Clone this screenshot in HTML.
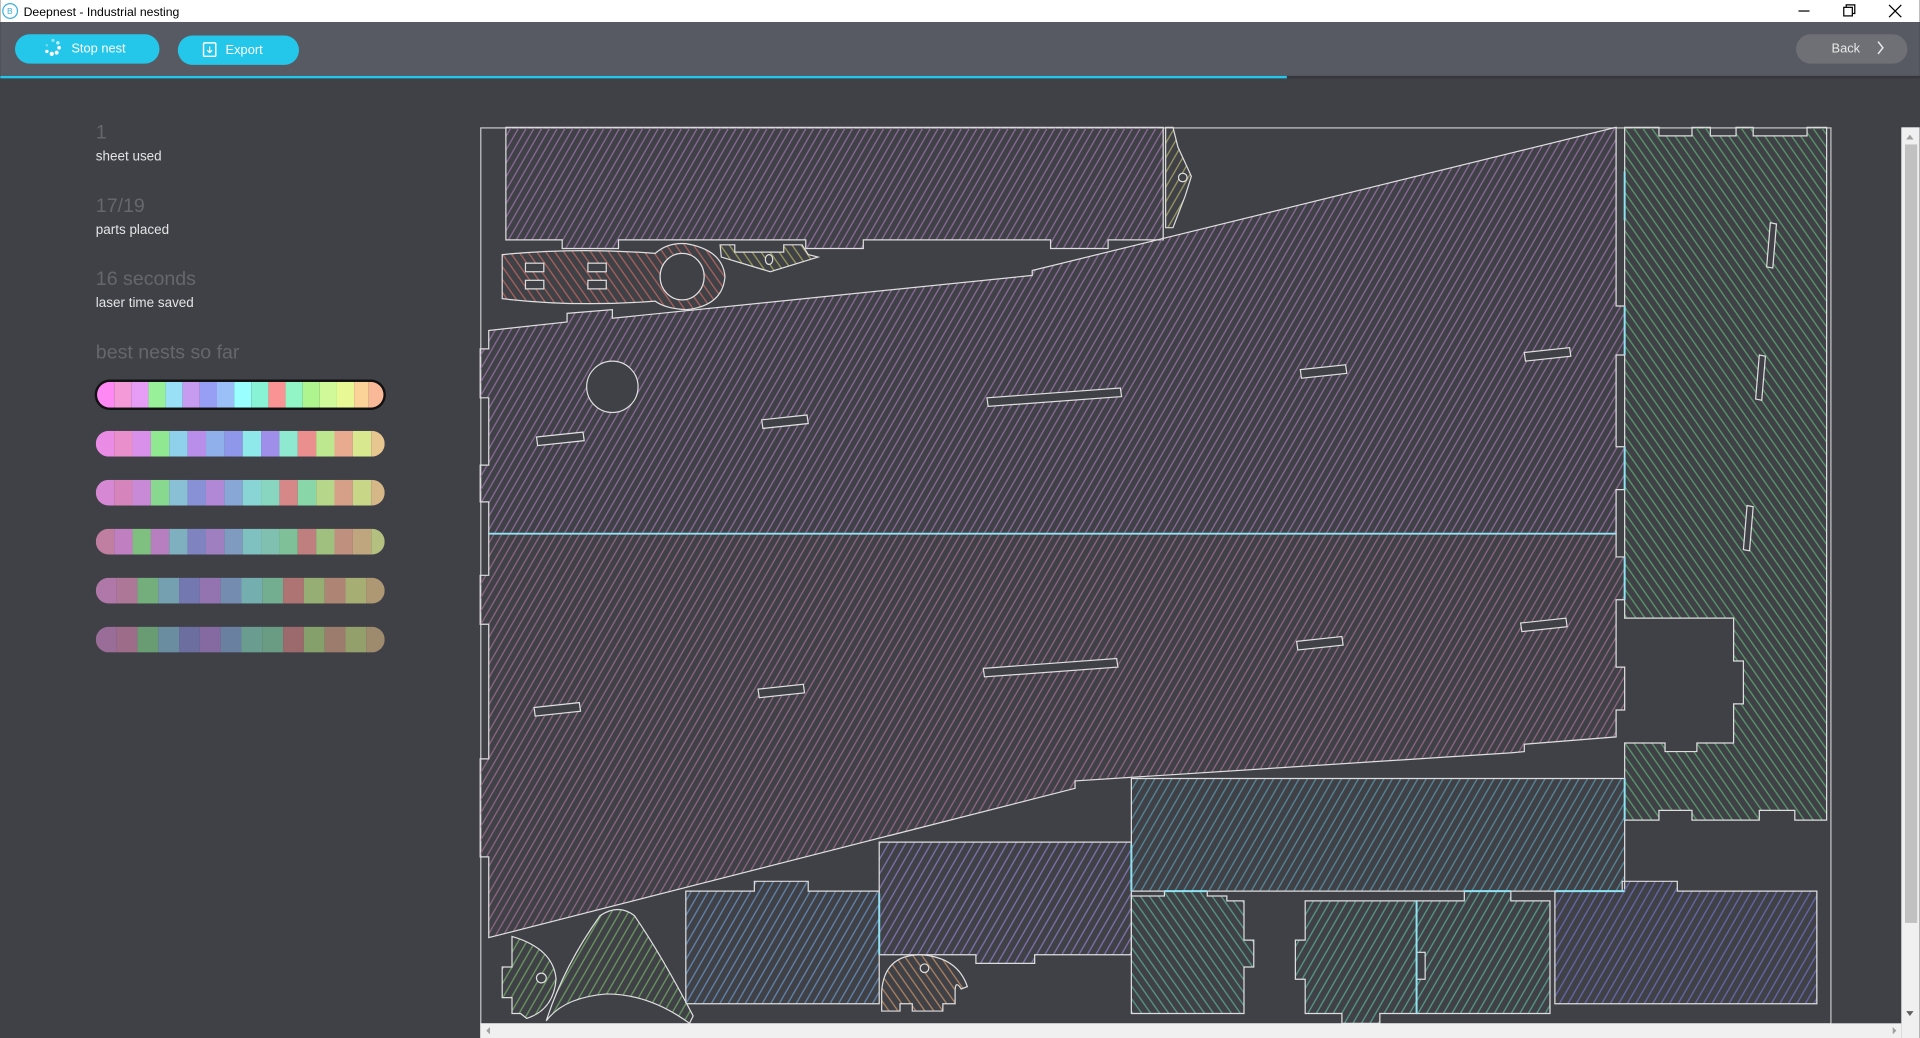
<!DOCTYPE html>
<html><head><meta charset="utf-8"><style>
html,body{margin:0;padding:0;width:1920px;height:1038px;overflow:hidden;background:#404147}
svg{display:block}
text{font-family:"Liberation Sans",sans-serif}
</style></head><body>
<svg width="1920" height="1038" viewBox="0 0 1568 848" xmlns="http://www.w3.org/2000/svg">
<defs>
<pattern id="hp" width="5.5" height="6" patternUnits="userSpaceOnUse" patternTransform="rotate(30)"><line x1="1" y1="0" x2="1" y2="6" stroke="#8a6896" stroke-width="1.1"/></pattern>
<pattern id="hpk" width="5.5" height="6" patternUnits="userSpaceOnUse" patternTransform="rotate(30)"><line x1="1" y1="0" x2="1" y2="6" stroke="#8c6480" stroke-width="1.1"/></pattern>
<pattern id="hg" width="6" height="6" patternUnits="userSpaceOnUse" patternTransform="rotate(-35)"><line x1="1" y1="0" x2="1" y2="6" stroke="#58966a" stroke-width="1.1"/></pattern>
<pattern id="hgt" width="6" height="6" patternUnits="userSpaceOnUse" patternTransform="rotate(-35)"><line x1="1" y1="0" x2="1" y2="6" stroke="#549682" stroke-width="1.1"/></pattern>
<pattern id="hgt2" width="6" height="6" patternUnits="userSpaceOnUse" patternTransform="rotate(30)"><line x1="1" y1="0" x2="1" y2="6" stroke="#549688" stroke-width="1.1"/></pattern>
<pattern id="ht" width="6" height="6" patternUnits="userSpaceOnUse" patternTransform="rotate(30)"><line x1="1" y1="0" x2="1" y2="6" stroke="#548698" stroke-width="1.1"/></pattern>
<pattern id="hb" width="6" height="6" patternUnits="userSpaceOnUse" patternTransform="rotate(30)"><line x1="1" y1="0" x2="1" y2="6" stroke="#6084ac" stroke-width="1.1"/></pattern>
<pattern id="hv" width="6" height="6" patternUnits="userSpaceOnUse" patternTransform="rotate(30)"><line x1="1" y1="0" x2="1" y2="6" stroke="#7e70ac" stroke-width="1.1"/></pattern>
<pattern id="hm" width="6" height="6" patternUnits="userSpaceOnUse" patternTransform="rotate(30)"><line x1="1" y1="0" x2="1" y2="6" stroke="#6467a8" stroke-width="1.1"/></pattern>
<pattern id="hr" width="6" height="6" patternUnits="userSpaceOnUse" patternTransform="rotate(-35)"><line x1="1" y1="0" x2="1" y2="6" stroke="#a6605a" stroke-width="1.1"/></pattern>
<pattern id="ho" width="6" height="6" patternUnits="userSpaceOnUse" patternTransform="rotate(-35)"><line x1="1" y1="0" x2="1" y2="6" stroke="#969658" stroke-width="1.1"/></pattern>
<pattern id="hlg" width="6" height="6" patternUnits="userSpaceOnUse" patternTransform="rotate(30)"><line x1="1" y1="0" x2="1" y2="6" stroke="#68965e" stroke-width="1.1"/></pattern>
<pattern id="hor" width="6" height="6" patternUnits="userSpaceOnUse" patternTransform="rotate(-35)"><line x1="1" y1="0" x2="1" y2="6" stroke="#aa805e" stroke-width="1.1"/></pattern>
<pattern id="hy" width="6" height="6" patternUnits="userSpaceOnUse" patternTransform="rotate(30)"><line x1="1" y1="0" x2="1" y2="6" stroke="#969660" stroke-width="1.1"/></pattern>
<clipPath id="sw1"><rect x="79" y="312" width="234" height="21" rx="10.5"/></clipPath>
<clipPath id="sw2"><rect x="78" y="352" width="236" height="21" rx="10.5"/></clipPath>
<clipPath id="sw3"><rect x="78" y="392" width="236" height="21" rx="10.5"/></clipPath>
<clipPath id="sw4"><rect x="78" y="432" width="236" height="21" rx="10.5"/></clipPath>
<clipPath id="sw5"><rect x="78" y="472" width="236" height="21" rx="10.5"/></clipPath>
<clipPath id="sw6"><rect x="78" y="512" width="236" height="21" rx="10.5"/></clipPath>
</defs>

<rect x="0" y="0" width="1568" height="18" fill="#ffffff"/>
<circle cx="8" cy="9" r="6" fill="none" stroke="#3ab0e0" stroke-width="1"/>
<text x="5.5" y="11.5" font-size="7" fill="#3ab0e0">B</text>
<text x="19" y="13" font-size="10" fill="#000">Deepnest - Industrial nesting</text>
<line x1="1469" y1="9" x2="1478" y2="9" stroke="#000" stroke-width="1"/>
<rect x="1506" y="6" width="7" height="7" fill="none" stroke="#000" stroke-width="1"/>
<path d="M1508 6V4h7v7h-2" fill="none" stroke="#000" stroke-width="1"/>
<path d="M1543 4l10 10M1553 4l-10 10" stroke="#000" stroke-width="1"/>

<rect x="0" y="18" width="1568" height="44" fill="#575a63"/>
<rect x="0" y="62" width="1568" height="2" fill="#36373c"/>
<rect x="0" y="62" width="1051" height="2" fill="#24c7ea"/>
<rect x="12" y="28" width="118" height="24" rx="12" fill="#24c7ea"/>
<g fill="#fff"><circle cx="43" cy="33" r="1.3" opacity=".5"/><circle cx="47" cy="35" r="1.4" opacity=".7"/><circle cx="48" cy="39" r="1.5"/><circle cx="46" cy="43" r="1.6"/><circle cx="42" cy="44" r="1.7"/><circle cx="38" cy="42" r="1.4"/><circle cx="38" cy="37" r="1" opacity=".4"/></g>
<text x="58" y="43" font-size="10.5" fill="#fff">Stop nest</text>
<rect x="145" y="29" width="99" height="24" rx="12" fill="#24c7ea"/>
<rect x="166" y="35" width="10" height="11" rx="1" fill="none" stroke="#fff" stroke-width="1.2"/>
<path d="M171 38v5M169 41l2 2 2-2" stroke="#fff" fill="none" stroke-width="1"/>
<text x="184" y="44" font-size="10.5" fill="#fff">Export</text>
<rect x="1467" y="28" width="91" height="24" rx="12" fill="#6f7075"/>
<text x="1496" y="43" font-size="10.5" fill="#e8e8e8">Back</text>
<path d="M1534 34l4 5-4 5" stroke="#e8e8e8" fill="none" stroke-width="1.2"/>

<text x="78" y="113" font-size="16" fill="#65676d">1</text>
<text x="78" y="131" font-size="11" fill="#e4e4e4">sheet used</text>
<text x="78" y="173" font-size="16" fill="#65676d">17/19</text>
<text x="78" y="191" font-size="11" fill="#e4e4e4">parts placed</text>
<text x="78" y="233" font-size="16" fill="#65676d">16 seconds</text>
<text x="78" y="251" font-size="11" fill="#e4e4e4">laser time saved</text>
<text x="78" y="293" font-size="16" fill="#65676d">best nests so far</text>

<rect x="77" y="310" width="238" height="25" rx="12.5" fill="#111"/>
<g clip-path="url(#sw1)">
<rect x="79" y="312" width="14" height="21" fill="#ff88f5"/><rect x="93" y="312" width="14" height="21" fill="#f59ad8"/><rect x="107" y="312" width="14" height="21" fill="#e79df5"/><rect x="121" y="312" width="14" height="21" fill="#98f098"/><rect x="135" y="312" width="14" height="21" fill="#99e0f7"/><rect x="149" y="312" width="14" height="21" fill="#c79bf0"/><rect x="163" y="312" width="14" height="21" fill="#979ff5"/><rect x="177" y="312" width="14" height="21" fill="#9ac0f7"/><rect x="191" y="312" width="14" height="21" fill="#99ffff"/><rect x="205" y="312" width="14" height="21" fill="#88f3d5"/><rect x="219" y="312" width="14" height="21" fill="#fa9393"/><rect x="233" y="312" width="14" height="21" fill="#91f5c5"/><rect x="247" y="312" width="14" height="21" fill="#aef58f"/><rect x="261" y="312" width="14" height="21" fill="#d0fa99"/><rect x="275" y="312" width="14" height="21" fill="#e8f894"/><rect x="289" y="312" width="12" height="21" fill="#fbd298"/><rect x="301" y="312" width="14" height="21" fill="#f9b897"/>
</g>
<g clip-path="url(#sw2)">
<rect x="78" y="352" width="15" height="21" fill="#ea8ce6"/><rect x="93" y="352" width="15" height="21" fill="#e88fcc"/><rect x="108" y="352" width="15" height="21" fill="#d890ea"/><rect x="123" y="352" width="15" height="21" fill="#90e890"/><rect x="138" y="352" width="15" height="21" fill="#8fd0ea"/><rect x="153" y="352" width="15" height="21" fill="#b98eea"/><rect x="168" y="352" width="15" height="21" fill="#8fb0ea"/><rect x="183" y="352" width="15" height="21" fill="#8f97ea"/><rect x="198" y="352" width="15" height="21" fill="#8fe9ea"/><rect x="213" y="352" width="15" height="21" fill="#9f8fea"/><rect x="228" y="352" width="15" height="21" fill="#8fe8d0"/><rect x="243" y="352" width="15" height="21" fill="#ea8e8e"/><rect x="258" y="352" width="15" height="21" fill="#bee88f"/><rect x="273" y="352" width="15" height="21" fill="#e9ab8f"/><rect x="288" y="352" width="15" height="21" fill="#d8e88f"/><rect x="303" y="352" width="11" height="21" fill="#e8c68f"/>
</g>
<g clip-path="url(#sw3)">
<rect x="78" y="392" width="15" height="21" fill="#d688d4"/><rect x="93" y="392" width="15" height="21" fill="#d585bb"/><rect x="108" y="392" width="15" height="21" fill="#c88ad6"/><rect x="123" y="392" width="15" height="21" fill="#88d890"/><rect x="138" y="392" width="15" height="21" fill="#89c0d6"/><rect x="153" y="392" width="15" height="21" fill="#8890d6"/><rect x="168" y="392" width="15" height="21" fill="#b088d6"/><rect x="183" y="392" width="15" height="21" fill="#88a6d6"/><rect x="198" y="392" width="15" height="21" fill="#89d5d6"/><rect x="213" y="392" width="15" height="21" fill="#89d6c0"/><rect x="228" y="392" width="15" height="21" fill="#d68888"/><rect x="243" y="392" width="15" height="21" fill="#89d6a8"/><rect x="258" y="392" width="15" height="21" fill="#b6d68a"/><rect x="273" y="392" width="15" height="21" fill="#d6a088"/><rect x="288" y="392" width="15" height="21" fill="#c8d688"/><rect x="303" y="392" width="11" height="21" fill="#d6b888"/>
</g>
<g clip-path="url(#sw4)">
<rect x="78" y="432" width="15" height="21" fill="#c07fa0"/><rect x="93" y="432" width="15" height="21" fill="#c07fc0"/><rect x="108" y="432" width="15" height="21" fill="#7fc080"/><rect x="123" y="432" width="15" height="21" fill="#b87fc0"/><rect x="138" y="432" width="15" height="21" fill="#7fb0c0"/><rect x="153" y="432" width="15" height="21" fill="#7f84c0"/><rect x="168" y="432" width="15" height="21" fill="#a07fc0"/><rect x="183" y="432" width="15" height="21" fill="#7f9cc0"/><rect x="198" y="432" width="15" height="21" fill="#7fc0c0"/><rect x="213" y="432" width="15" height="21" fill="#7fc0b0"/><rect x="228" y="432" width="15" height="21" fill="#7fc098"/><rect x="243" y="432" width="15" height="21" fill="#c07f7f"/><rect x="258" y="432" width="15" height="21" fill="#a0c07f"/><rect x="273" y="432" width="15" height="21" fill="#c0907f"/><rect x="288" y="432" width="15" height="21" fill="#c0a67f"/><rect x="303" y="432" width="11" height="21" fill="#b4c07f"/>
</g>
<g clip-path="url(#sw5)">
<rect x="78" y="472" width="17" height="21" fill="#b078a8"/><rect x="95" y="472" width="17" height="21" fill="#ad7898"/><rect x="112" y="472" width="17" height="21" fill="#74ae7c"/><rect x="129" y="472" width="17" height="21" fill="#74a0b0"/><rect x="146" y="472" width="17" height="21" fill="#7478b0"/><rect x="163" y="472" width="17" height="21" fill="#9474b0"/><rect x="180" y="472" width="17" height="21" fill="#748cb0"/><rect x="197" y="472" width="17" height="21" fill="#74aeae"/><rect x="214" y="472" width="17" height="21" fill="#74ae90"/><rect x="231" y="472" width="17" height="21" fill="#ae7474"/><rect x="248" y="472" width="17" height="21" fill="#96ae74"/><rect x="265" y="472" width="17" height="21" fill="#ae8474"/><rect x="282" y="472" width="17" height="21" fill="#a6ae74"/><rect x="299" y="472" width="15" height="21" fill="#ae9874"/>
</g>
<g clip-path="url(#sw6)">
<rect x="78" y="512" width="17" height="21" fill="#9a6c98"/><rect x="95" y="512" width="17" height="21" fill="#9c6c88"/><rect x="112" y="512" width="17" height="21" fill="#6a9c74"/><rect x="129" y="512" width="17" height="21" fill="#6a8ea0"/><rect x="146" y="512" width="17" height="21" fill="#6c6ea0"/><rect x="163" y="512" width="17" height="21" fill="#846aa0"/><rect x="180" y="512" width="17" height="21" fill="#6a80a0"/><rect x="197" y="512" width="17" height="21" fill="#6a9c90"/><rect x="214" y="512" width="17" height="21" fill="#6a9c84"/><rect x="231" y="512" width="17" height="21" fill="#9c6a6c"/><rect x="248" y="512" width="17" height="21" fill="#86a06c"/><rect x="265" y="512" width="17" height="21" fill="#9c7c6c"/><rect x="282" y="512" width="17" height="21" fill="#94a06c"/><rect x="299" y="512" width="15" height="21" fill="#9e8a6c"/>
</g>

<rect x="392.5" y="104.5" width="1103" height="732" fill="none" stroke="#c8c8c8" stroke-width="1"/>
<g stroke="#dedede" stroke-width="1" stroke-linejoin="miter">
<path d="M413 104H950V196H905V203H858V196H705V203H658V196H505V203H459V196H413Z" fill="url(#hp)"/>
<path d="M952 104h6l4 16 11 24-5 16-10 26h-6Z" fill="url(#hy)"/>
<circle cx="966" cy="145" r="3.5" fill="#404147"/>
<path d="M410 208Q470 202 535 207Q545 198 560 199Q590 204 592 226Q590 250 560 253Q543 252 535 246Q470 251 410 244Z" fill="url(#hr)"/>
<ellipse cx="557" cy="226" rx="18" ry="19" fill="#404147"/>
<rect x="429" y="215" width="15" height="7" fill="#404147"/><rect x="429" y="229" width="15" height="7" fill="#404147"/>
<rect x="480" y="215" width="15" height="7" fill="#404147"/><rect x="480" y="229" width="15" height="7" fill="#404147"/>
<path d="M588 200H600V206H640V200H655L660 208 668 210 629 222 589 210Z" fill="url(#ho)"/>
<ellipse cx="628" cy="212" rx="3" ry="4" fill="#404147"/>
<path d="M399 270L463 263V256L500 253V260L843 225V221L1320 104V250H1327V290H1320V365H1327V400H1320V436H399V410H392V380H399V325H392V285H399Z" fill="url(#hp)"/>
<path d="M399 436H1320V455H1327V490H1320V545H1327V580H1320V602L1245 608V614L1235 615L878 638V644L399 766V700H392V620H399V510H392V470H399Z" fill="url(#hpk)"/>
<circle cx="500" cy="316" r="21" fill="#404147"/>
<g fill="#404147">
<path d="M438 357l38-4 1 7-38 4Z"/><path d="M622 343l37-4 1 7-37 4Z"/><path d="M806 325l109-8 1 7-109 8Z"/><path d="M1062 302l37-4 1 7-37 4Z"/><path d="M1245 288l37-4 1 7-37 4Z"/>
<path d="M436 578l37-4 1 7-37 4Z"/><path d="M619 563l37-4 1 7-37 4Z"/><path d="M803 546l109-8 1 7-109 8Z"/><path d="M1059 524l37-4 1 7-37 4Z"/><path d="M1242 509l37-4 1 7-37 4Z"/>
</g>
<path d="M1327 104H1355V111H1382V104H1397V111H1418V104H1432V111H1476V104H1492V670H1466V662H1437V670H1382V662H1355V670H1327V607H1360V614H1386V607H1416V575H1424V540H1416V505H1327Z" fill="url(#hg)"/>
<g fill="#404147"><path d="M1446 182l5 1-3 36-5-1Z"/><path d="M1437 290l5 1-3 36-5-1Z"/><path d="M1427 413l5 1-3 36-5-1Z"/></g>
<path d="M924 636H1327V728H924Z" fill="url(#ht)"/>
<path d="M718 688H924V780H845V787H797V780H718Z" fill="url(#hv)"/>
<path d="M560 728H616V720H660V728H718V820H560Z" fill="url(#hb)"/>
<path d="M924 732H951V728H986V732H1002V736H1016V768H1024V790H1016V828H924Z" fill="url(#hgt)"/>
<path d="M1066 736H1157V828H1127V836H1096V828H1066V800H1058V768H1066Z" fill="url(#hgt2)"/>
<path d="M1157 736H1196V728H1234V736H1266V828H1157Z" fill="url(#hgt2)"/>
<rect x="1157" y="778" width="7" height="22" fill="#404147"/>
<path d="M1270 728H1325V720H1370V728H1484V820H1270Z" fill="url(#hm)"/>
<path d="M418 765Q452 775 454 800Q452 825 430 832L425 828H418V815H410V790H418Z" fill="url(#hlg)"/>
<circle cx="442" cy="799" r="4" fill="#404147"/>
<path d="M446 834Q460 790 490 748Q505 738 518 748Q540 780 566 830L563 836Q530 812 495 812Q460 815 446 834Z" fill="url(#hlg)"/>
<path d="M720 810Q722 780 752 780Q782 782 790 806L785 808Q780 800 780 810V820H770V826H745V820H735V826H720Z" fill="url(#hor)"/>
<circle cx="755" cy="791" r="3.5" fill="#404147"/>
</g>
<g stroke="#8fe3f2" stroke-width="1.6">
<line x1="399" y1="436" x2="1320" y2="436"/>
<line x1="1327" y1="140" x2="1327" y2="180"/><line x1="1327" y1="250" x2="1327" y2="290"/><line x1="1327" y1="365" x2="1327" y2="400"/><line x1="1327" y1="455" x2="1327" y2="490"/>
<line x1="1327" y1="636" x2="1327" y2="670"/>
<line x1="718" y1="730" x2="718" y2="780"/>
<line x1="924" y1="690" x2="924" y2="728"/>
<line x1="1157" y1="736" x2="1157" y2="828"/>
<path d="M951 728H986M1196 728H1234M1270 728H1327" fill="none"/>
</g>

<rect x="1553" y="104" width="15" height="744" fill="#f0f0f0"/>
<rect x="1556" y="118" width="10" height="636" fill="#c1c1c1"/>
<path d="M1557 114l3-4 3 4Z" fill="#a0a0a0"/>
<path d="M1557 826l3 4 3-4Z" fill="#606060"/>
<rect x="392" y="836" width="1161" height="12" fill="#f0f0f0"/>
<path d="M400 839l-3 3 3 3Z" fill="#a0a0a0"/>
<path d="M1546 839l3 3-3 3Z" fill="#a0a0a0"/>
</svg>
</body></html>
